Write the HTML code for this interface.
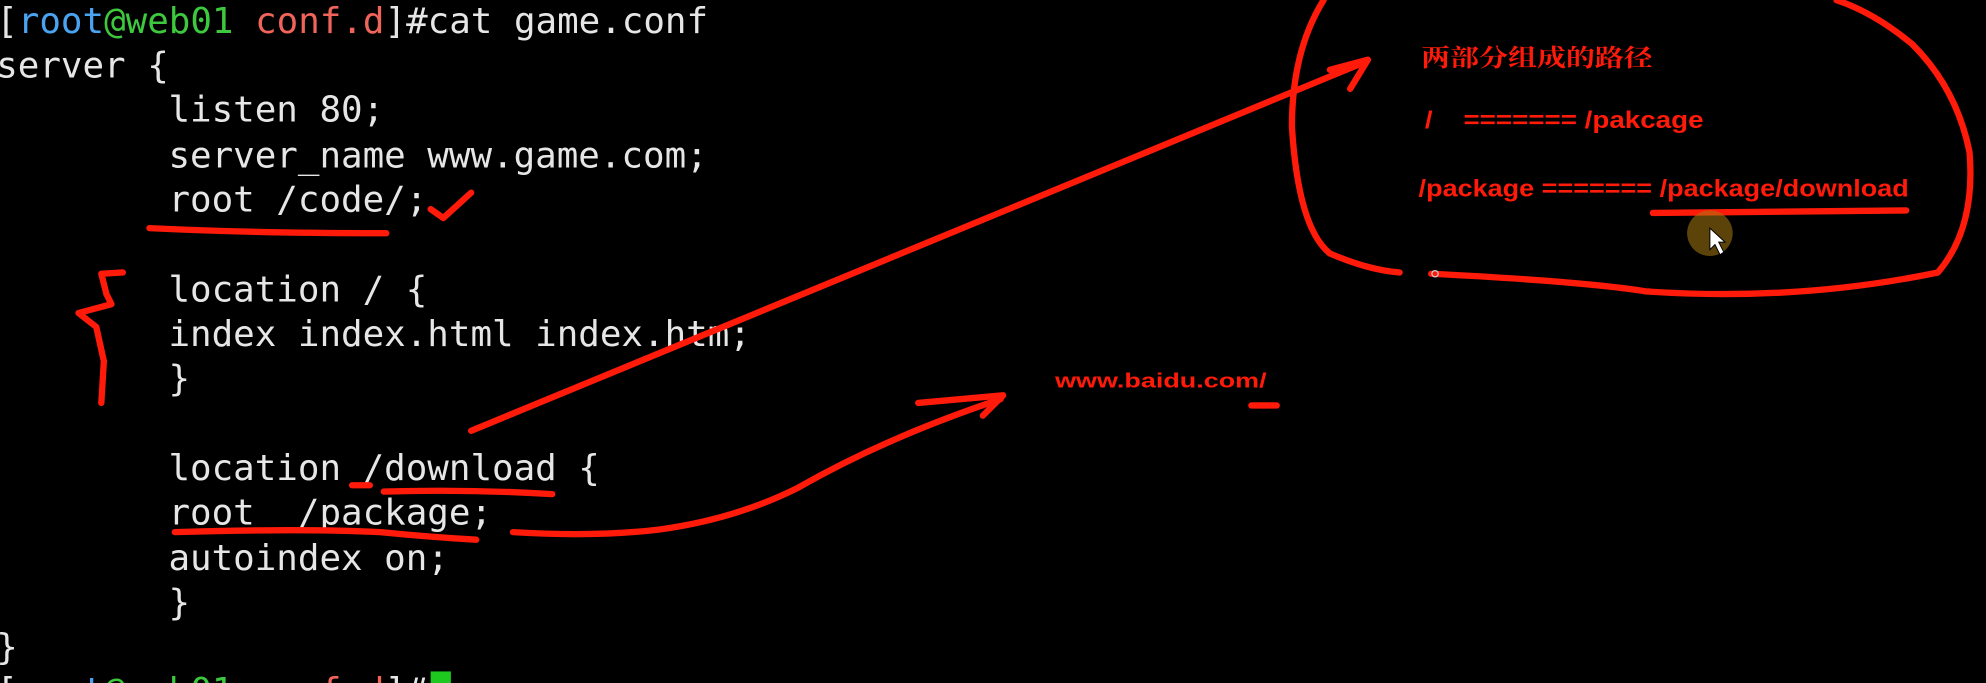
<!DOCTYPE html>
<html><head><meta charset="utf-8"><style>
html,body{margin:0;padding:0;background:#000;overflow:hidden}
svg{display:block}
text{white-space:pre}
</style></head><body>
<svg width="1986" height="683" viewBox="0 0 1568 539" xmlns="http://www.w3.org/2000/svg">
<rect width="1568" height="539" fill="#000"/>
<g font-family="DejaVu Sans Mono, Liberation Mono, monospace" font-size="28.3" fill="#e6e6e6">
<text x="-3" y="26"><tspan fill="#e6e6e6">[</tspan><tspan fill="#4aa3f0">root</tspan><tspan fill="#3ec83e">@web01</tspan> <tspan fill="#f0645a">conf.d</tspan>]#cat game.conf</text>
<text x="-3" y="61">server {</text>
<text x="133" y="96">listen 80;</text>
<text x="133" y="132">server_name www.game.com;</text>
<text x="133" y="167">root /code/;</text>
<text x="133" y="238">location / {</text>
<text x="133" y="273">index index.html index.htm;</text>
<text x="133" y="308">}</text>
<text x="133" y="379">location /download {</text>
<text x="133" y="414">root  /package;</text>
<text x="133" y="450">autoindex on;</text>
<text x="133" y="485">}</text>
<text x="-3" y="520">}</text>
<text x="-3" y="555"><tspan fill="#e6e6e6">[</tspan><tspan fill="#4aa3f0">root</tspan><tspan fill="#3ec83e">@web01</tspan> <tspan fill="#f0645a">conf.d</tspan>]#</text>
</g>
<rect x="340" y="530" width="16" height="12" fill="#1ec81e"/>
<g stroke="#ff1a0a" stroke-width="5" fill="none" stroke-linecap="round" stroke-linejoin="round">
<path d="M118 180 Q200 184 305 184"/>
<path d="M340 165 L350 172 L372 152"/>
<path d="M97 215 L80 216 L84 232 L88 240 L62 247 L76 258 L82 285 L80 318"/>
<path d="M372 340 L1075 50"/>
<path d="M1050 55 L1080 47 L1066 70"/>
<path d="M278 383 L292 383"/>
<path d="M303 388 Q370 386 436 390"/>
<path d="M138 420 Q240 417 300 420 Q340 424 376 426"/>
<path d="M405 420 Q470 424 520 418 Q580 410 630 385 Q700 345 790 315"/>
<path d="M725 318 L792 312 L776 328"/>
<path d="M988 320 L1008 320"/>
<path d="M1305 168 L1505 166"/>
<path d="M1045 0 Q1020 40 1020 100 Q1025 180 1050 200 Q1080 213 1105 215"/>
<path d="M1130 216 Q1250 222 1300 230 Q1420 238 1530 215 Q1560 180 1555 120 Q1545 70 1510 35 Q1480 10 1450 0"/>
</g>
<g font-family="Liberation Sans, Noto Sans CJK SC, sans-serif" font-weight="bold" fill="#ff1a0a">
<text x="1122" y="52" font-size="19" font-family="Noto Serif CJK SC, serif" textLength="183" lengthAdjust="spacingAndGlyphs">两部分组成的路径</text>
<text x="1125" y="101" font-size="19" textLength="220" lengthAdjust="spacingAndGlyphs">/    ======= /pakcage</text>
<text x="1120" y="155" font-size="19" textLength="387" lengthAdjust="spacingAndGlyphs">/package ======= /package/download</text>
<text x="833" y="306" font-size="16" textLength="167" lengthAdjust="spacingAndGlyphs">www.baidu.com/</text>
</g>
<circle cx="1350" cy="184" r="18" fill="#a87a10" opacity="0.55"/>
<path d="M1350 180 L1350 197 L1354 193 L1358 201 L1361 199 L1357 191 L1362 191 Z" fill="#fff" stroke="#000" stroke-width="0.8"/>
<circle cx="1133" cy="216" r="2.5" fill="none" stroke="#ccc" stroke-width="1"/>
</svg>
</body></html>
